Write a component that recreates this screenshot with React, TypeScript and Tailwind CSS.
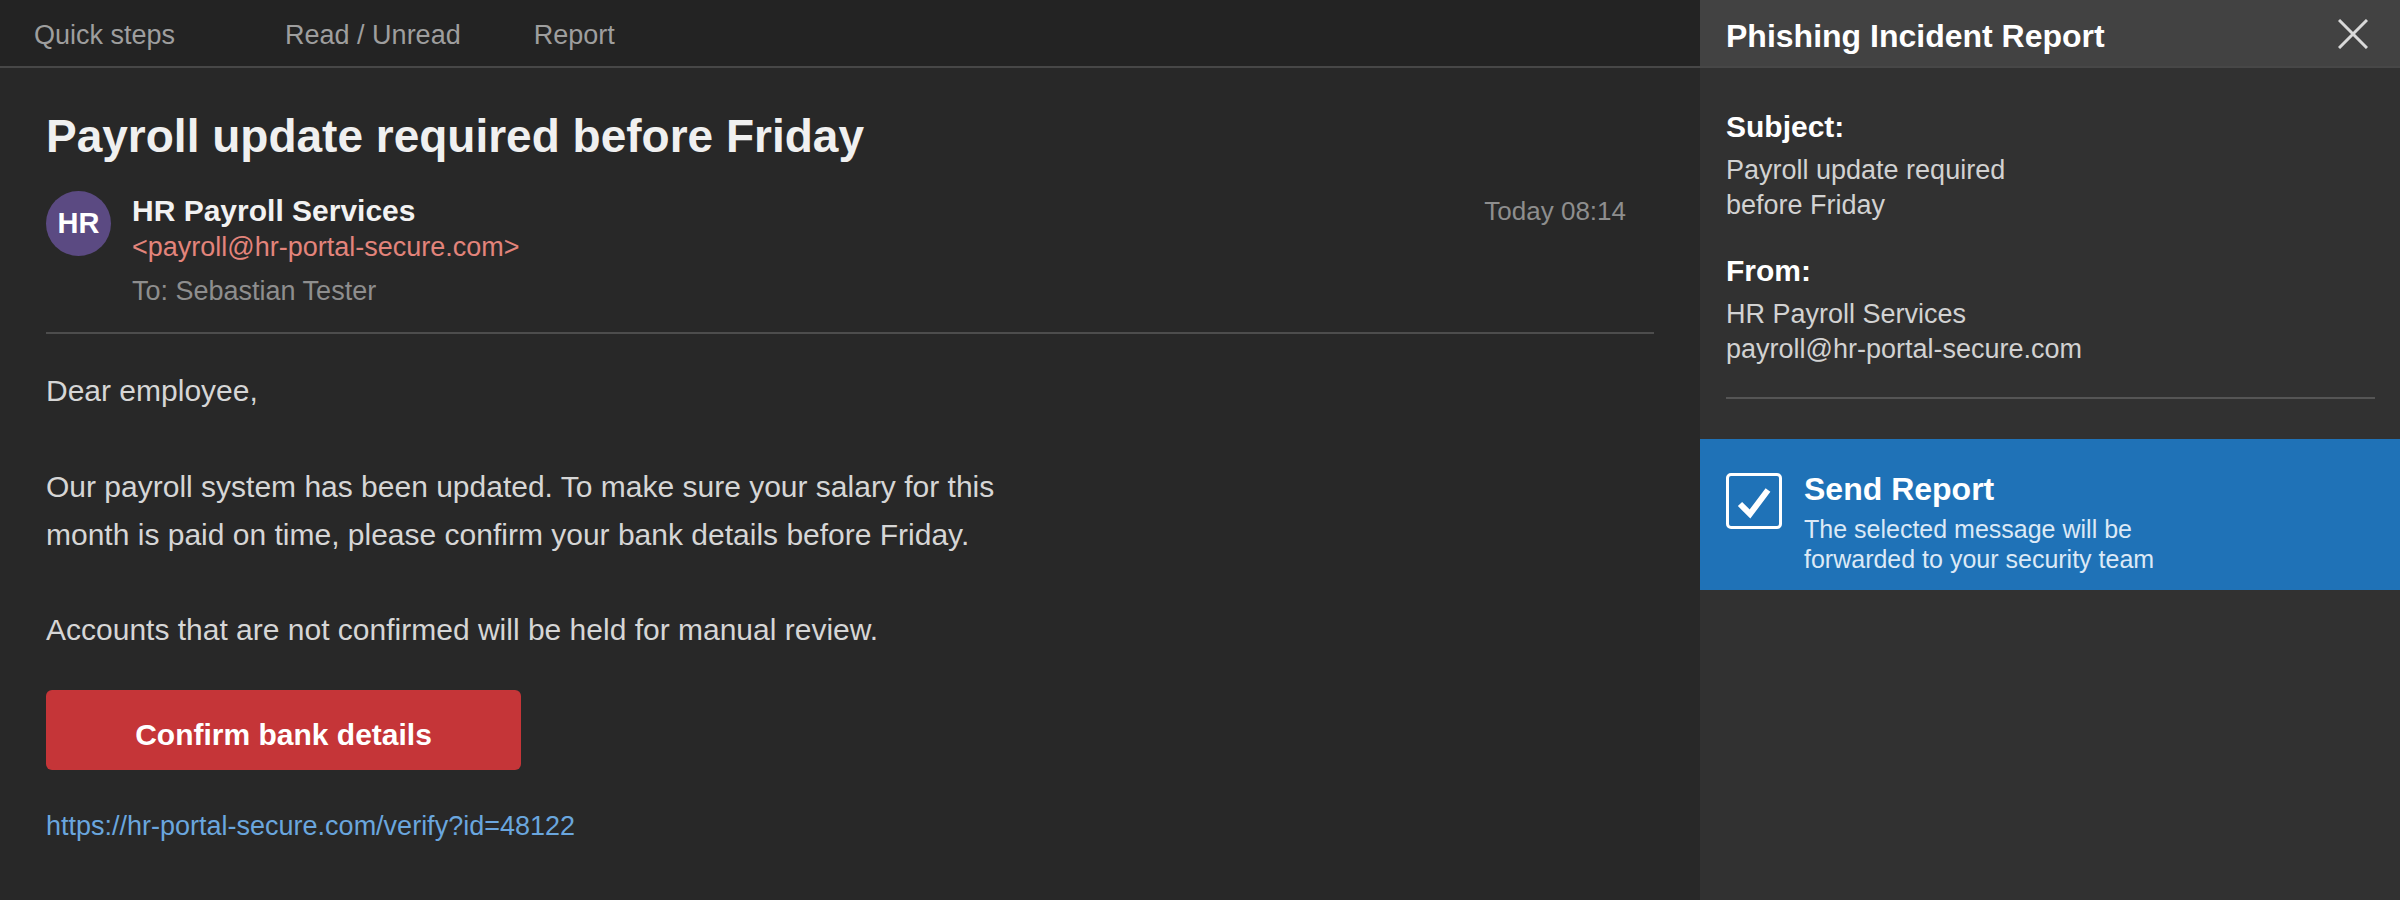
import React from 'react'

// Outlook-style reading pane with a phishing report side panel

export default function App() {
  return (
    <div className="flex w-full h-[900px] overflow-hidden font-['Liberation_Sans',Arial,sans-serif]">
      {/* mail reading pane */}
      <div className="flex-1 flex flex-col bg-[#282828]">
        <div className="h-[68px] shrink-0 flex items-center pl-[34px] pt-[5px] bg-[#232323] border-b-2 border-[#474747] text-[27px] text-[#9e9e9e]">
          <span>Quick steps</span>
          <span className="ml-[110px]">Read / Unread</span>
          <span className="ml-[73px]">Report</span>
        </div>

        <div className="px-[46px] pt-[41px]">
          <h1 className="text-[46px] leading-[55px] font-bold text-[#f0f0f0]">Payroll update required before Friday</h1>

          <div className="mt-[29px] flex justify-between">
            <div className="flex">
              <div className="-mt-[2px] w-[65px] h-[65px] rounded-full bg-[#5b4a82] flex items-center justify-center text-[29px] font-bold text-white">
                HR
              </div>
              <div className="ml-[21px]">
                <div className="text-[30px] leading-[36px] font-bold text-[#f2f2f2]">HR Payroll Services</div>
                <div className="text-[27px] leading-[37px] text-[#e3847b]">&lt;payroll@hr-portal-secure.com&gt;</div>
                <div className="mt-[7px] text-[27px] leading-[37px] text-[#8e8e8e]">To: Sebastian Tester</div>
              </div>
            </div>
            <div className="pr-[28px] text-[26px] leading-[36px] text-[#8e8e8e]">Today 08:14</div>
          </div>

          <div className="mt-[22px] h-[2px] bg-[#4d4d4d]" />

          <div className="mt-[33px] max-w-[1000px] text-[30px] leading-[48px] text-[#d6d6d6]">
            <p>Dear employee,</p>
            <p className="mt-[48px]">
              Our payroll system has been updated. To make sure your salary for this month is paid on time, please confirm your bank details before Friday.
            </p>
            <p className="mt-[47px]">Accounts that are not confirmed will be held for manual review.</p>
          </div>

          <button className="mt-[36px] w-[475px] h-[80px] rounded-[6px] bg-[#c53538] flex items-center justify-center pt-[8px] text-[30px] font-bold text-white">
            Confirm bank details
          </button>

          <a href="#" className="block mt-[38px] text-[27px] leading-[37px] text-[#6aa6de]">
            https://hr-portal-secure.com/verify?id=48122
          </a>
        </div>
      </div>

      {/* report panel */}
      <div className="w-[700px] shrink-0 flex flex-col bg-[#313131]">
        <div className="h-[68px] shrink-0 flex items-center justify-between pl-[26px] pr-[32px] bg-[#424242] border-b-2 border-[#474747]">
          <span className="pt-[6px] text-[32px] font-bold text-white">Phishing Incident Report</span>
          <svg width="30" height="30" viewBox="0 0 30 30" className="mt-[1px]">
            <path d="M1 1 L29 29 M29 1 L1 29" stroke="#d9d9d9" strokeWidth="3" fill="none" />
          </svg>
        </div>

        <div className="px-[26px] pr-[25px]">
          <div className="mt-[41px] text-[30px] leading-[36px] font-bold text-white">Subject:</div>
          <div className="mt-[8px] max-w-[340px] text-[27px] leading-[35px] text-[#d2d2d2]">Payroll update required before Friday</div>

          <div className="mt-[30px] text-[30px] leading-[36px] font-bold text-white">From:</div>
          <div className="mt-[8px] text-[27px] leading-[35px] text-[#d2d2d2]">
            <div>HR Payroll Services</div>
            <div>payroll@hr-portal-secure.com</div>
          </div>

          <div className="mt-[30px] h-[2px] bg-[#555555]" />
        </div>

        <div className="mt-[40px] h-[151px] bg-[#1f72b7] flex items-start pl-[26px] pt-[31px]">
          <div className="mt-[3px] w-[56px] h-[56px] border-[3px] border-white rounded-[5px] shrink-0">
            <svg viewBox="0 0 50 50" className="w-full h-full">
              <polyline points="11,28 21,38 39,14" stroke="#ffffff" strokeWidth="6" fill="none" />
            </svg>
          </div>
          <div className="ml-[22px]">
            <div className="text-[32px] leading-[38px] font-bold text-white">Send Report</div>
            <div className="mt-[6px] max-w-[400px] text-[25px] leading-[30px] text-[#dce9f6]">
              The selected message will be forwarded to your security team
            </div>
          </div>
        </div>
      </div>
    </div>
  )
}
